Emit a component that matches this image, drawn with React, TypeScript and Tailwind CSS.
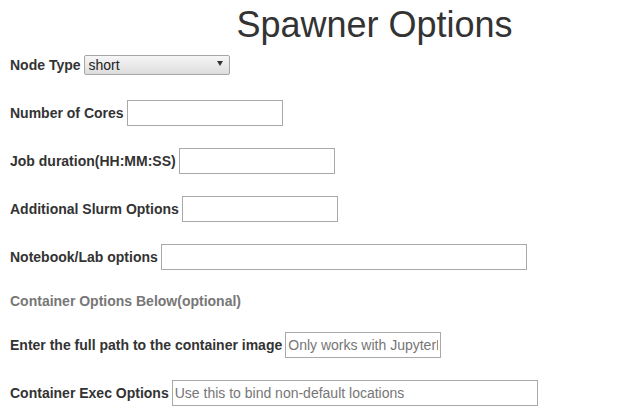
// Spawner options form

const font = "font-['Liberation_Sans',Arial,sans-serif]"

interface FieldRow {
  label: string
  width: string
  placeholder?: string
}

const topFields: FieldRow[] = [
  { label: "Number of Cores", width: "w-[156px]" },
  { label: "Job duration(HH:MM:SS)", width: "w-[156px]" },
  { label: "Additional Slurm Options", width: "w-[156px]" },
  { label: "Notebook/Lab options", width: "w-[366px]" },
]

const containerFields: FieldRow[] = [
  {
    label: "Enter the full path to the container image",
    width: "w-[156px]",
    placeholder: "Only works with JupyterLab",
  },
  {
    label: "Container Exec Options",
    width: "w-[366px]",
    placeholder: "Use this to bind non-default locations",
  },
]

function Row({ field }: { field: FieldRow }) {
  return (
    <div className="flex h-[48px] items-center gap-[3px] pl-[10px]">
      <label className="text-[14px] font-bold text-[#333]">{field.label}</label>
      <input
        type="text"
        placeholder={field.placeholder}
        className={`${field.width} h-[26px] border border-[#a9a9a9] bg-white px-[2px] text-[14px] text-[#333] outline-none placeholder:text-[#767676]`}
      />
    </div>
  )
}

export default function App() {
  return (
    <div className={`${font} h-[415px] w-[617px] overflow-hidden bg-white`}>
      <h1 className="h-[41px] pl-[132px] pt-[5px] text-center text-[36px] font-normal leading-[40px] text-[#333]">
        Spawner Options
      </h1>

      <div className="flex h-[48px] items-center gap-[3px] pl-[10px]">
        <label className="text-[14px] font-bold text-[#333]">Node Type</label>
        <div className="relative">
          <select className="h-[20px] w-[146px] appearance-none rounded-[2px] border border-[#a6a6a6] bg-gradient-to-b from-[#f6f6f6] to-[#dddddd] pl-[4px] text-[14px] leading-[18px] text-[#222] outline-none">
            <option>short</option>
            <option>long</option>
          </select>
          <svg
            className="pointer-events-none absolute right-[7px] top-[8px]"
            width="6"
            height="5"
            viewBox="0 0 6 5"
          >
            <path d="M0 0H6L3 5Z" fill="#333" />
          </svg>
        </div>
      </div>

      {topFields.map((f) => (
        <Row key={f.label} field={f} />
      ))}

      <div className="flex h-[40px] items-center pl-[10px]">
        <span className="text-[14px] font-bold text-[#777]">
          Container Options Below(optional)
        </span>
      </div>

      {containerFields.map((f) => (
        <Row key={f.label} field={f} />
      ))}
    </div>
  )
}
